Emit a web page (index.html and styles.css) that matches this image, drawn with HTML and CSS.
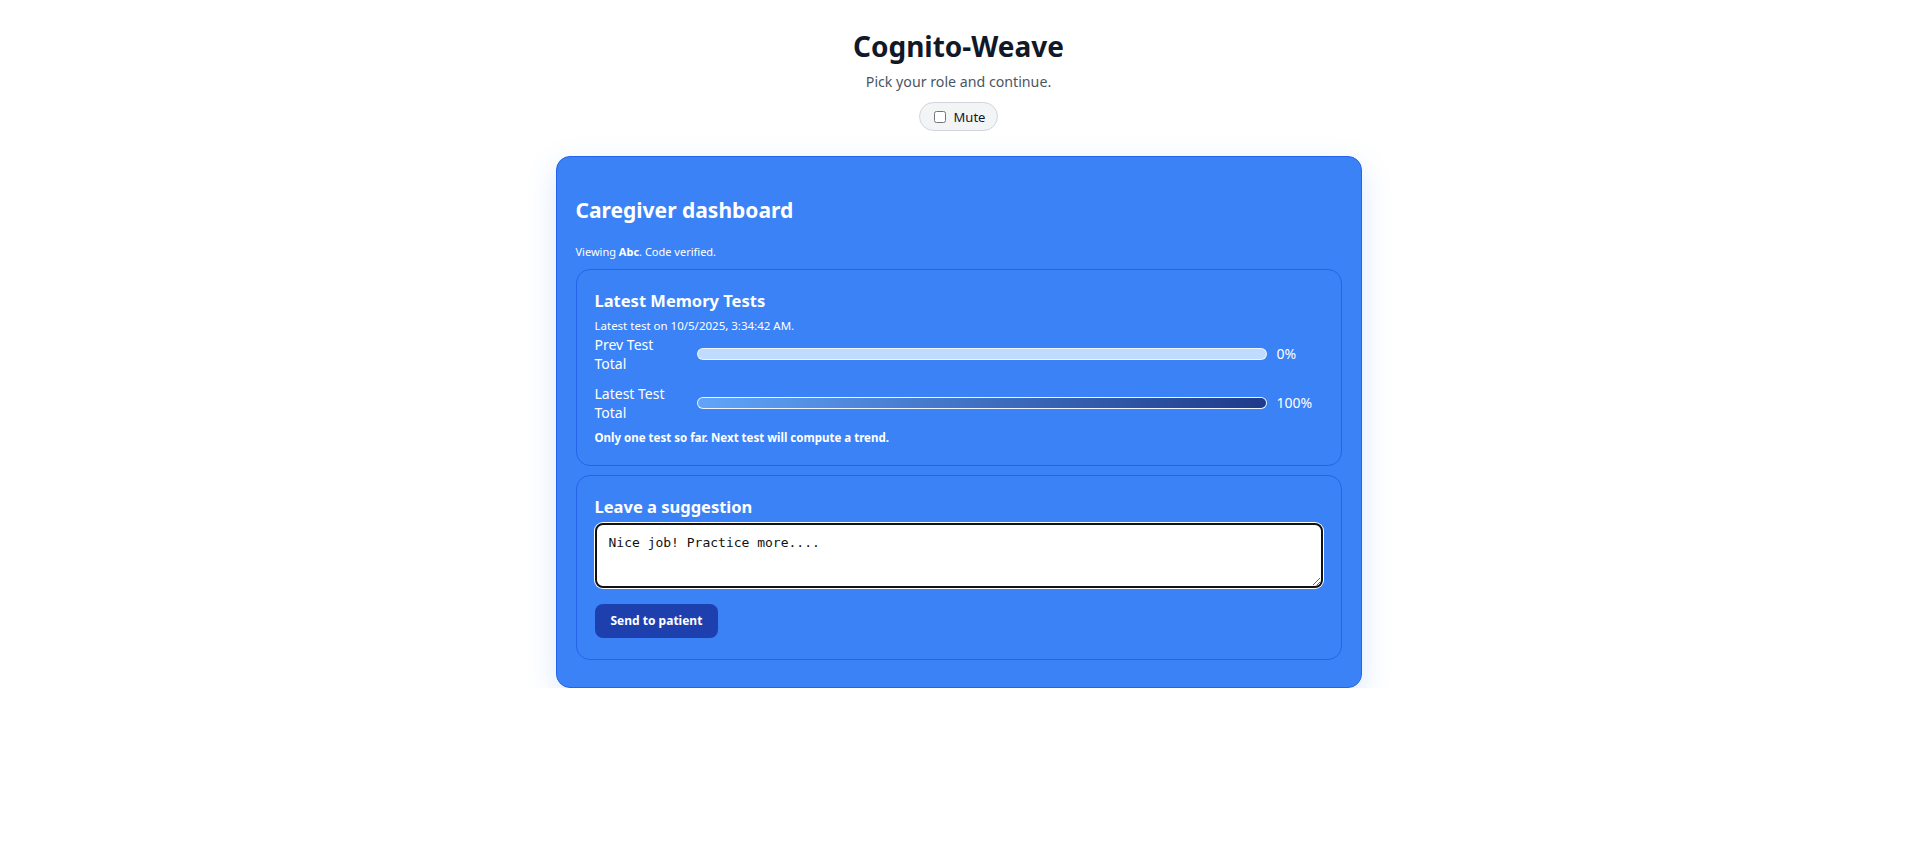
FILE: index.html
```html
<!DOCTYPE html>
<html lang="en">
<head>
<meta charset="utf-8">
<title>Cognito-Weave</title>
<link rel="stylesheet" href="styles.css">
</head>
<body>
<header class="top">
  <h1 class="brand">Cognito-Weave</h1>
  <p class="tagline">Pick your role and continue.</p>
  <label class="mute"><input type="checkbox" class="mute-box"><span>Mute</span></label>
</header>
<main class="card">
  <h2 class="card-title">Caregiver dashboard</h2>
  <p class="viewing">Viewing <strong>Abc</strong>. Code verified.</p>
  <section class="panel">
    <h3 class="panel-title">Latest Memory Tests</h3>
    <p class="meta">Latest test on 10/5/2025, 3:34:42 AM.</p>
    <div class="row">
      <div class="row-label">Prev Test Total</div>
      <div class="bar"><div class="fill" style="width:0%"></div></div>
      <div class="pct">0%</div>
    </div>
    <div class="row">
      <div class="row-label">Latest Test Total</div>
      <div class="bar"><div class="fill" style="width:100%"></div></div>
      <div class="pct">100%</div>
    </div>
    <p class="note">Only one test so far. Next test will compute a trend.</p>
  </section>
  <section class="panel">
    <h3 class="panel-title">Leave a suggestion</h3>
    <textarea class="suggest">Nice job! Practice more....</textarea>
    <button class="send" type="button">Send to patient</button>
  </section>
</main>
</body>
</html>
```
FILE: styles.css
```css
* { box-sizing: border-box; }
body {
  margin: 0;
  background: #ffffff;
  font-family: "Noto Sans", "Open Sans", sans-serif;
  color: #111827;
}
.top {
  display: flex;
  flex-direction: column;
  align-items: center;
  padding-top: 28px;
}
.brand {
  margin: 0;
  font-size: 28px;
  line-height: 36px;
  font-weight: 700;
  color: #111827;
}
.tagline {
  margin: 8px 0 0;
  font-size: 14.2px;
  line-height: 20px;
  color: #4b5563;
}
.mute {
  margin-top: 10px;
  display: inline-flex;
  align-items: center;
  gap: 8px;
  height: 29px;
  padding: 0 12px 0 14px;
  border: 1px solid #d1d5db;
  border-radius: 999px;
  background: #f3f4f6;
  font-size: 13px;
  color: #111827;
}
.mute-box {
  margin: 0;
  width: 12px;
  height: 12px;
}
.card {
  width: 806px;
  margin: 25px auto 0;
  background: #3b82f6;
  border: 1px solid #2563eb;
  border-radius: 14px;
  padding: 37.5px 19px 19px;
  box-shadow: 0 10px 30px rgba(59, 130, 246, 0.18);
  color: #ffffff;
}
.card-title {
  margin: 0;
  font-size: 21px;
  line-height: 30px;
  font-weight: 700;
}
.viewing {
  margin: 19px 0 9px;
  font-size: 11px;
  line-height: 16px;
}
.viewing strong { font-weight: 700; }
.panel {
  border: 1px solid #2563eb;
  border-radius: 14px;
  padding: 20px 18px 19px;
  margin-bottom: 9px;
}
.panel + .panel {
  padding-bottom: 21px;
  margin-bottom: 8px;
}
.panel-title {
  margin: 0;
  font-size: 16.5px;
  line-height: 22px;
  font-weight: 700;
}
.meta {
  margin: 6px 0 0;
  font-size: 11.5px;
  line-height: 16px;
}
.row {
  display: grid;
  grid-template-columns: 92px 1fr 46px;
  column-gap: 10px;
  align-items: center;
  font-size: 14px;
  line-height: 19.5px;
  margin-top: 1px;
}
.row + .row { margin-top: 10px; }
.bar {
  height: 12px;
  border-radius: 999px;
  background: #bfdbfe;
  border: 1px solid rgba(255, 255, 255, 0.75);
  overflow: hidden;
}
.fill {
  height: 100%;
  background: linear-gradient(90deg, #60a5fa, #1e3a8a);
}
.pct { font-size: 14px; }
.note {
  margin: 7px 0 0;
  font-size: 11.5px;
  line-height: 16px;
  font-weight: 700;
}
.suggest {
  display: block;
  width: 100%;
  height: 65px;
  margin-top: 5px;
  padding: 10px 12px;
  border: 2px solid #111111;
  border-radius: 8px;
  box-shadow: 0 0 0 1px #ffffff;
  font-family: "DejaVu Sans Mono", "Liberation Mono", monospace;
  font-size: 13px;
  line-height: 16px;
  color: #111111;
  background: #ffffff;
  resize: vertical;
}
.send {
  margin-top: 16px;
  height: 34px;
  padding: 0 16px;
  border: 0;
  border-radius: 8px;
  background: #1e40af;
  color: #ffffff;
  font-family: inherit;
  font-size: 12px;
  font-weight: 700;
}
```
